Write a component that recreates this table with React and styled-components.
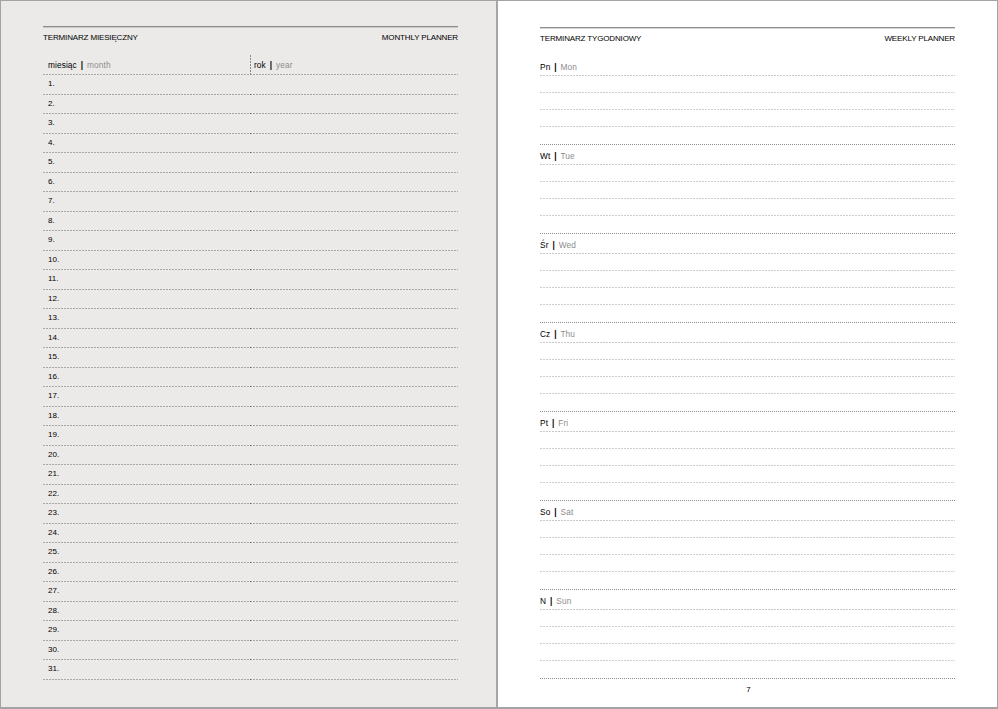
import styled, { createGlobalStyle } from 'styled-components'

const GlobalStyle = createGlobalStyle`
  html, body {
    margin: 0;
    padding: 0;
    background: #ffffff;
  }
  * {
    box-sizing: border-box;
  }
`

const dashed = (color, dash = 2, gap = 1) => `
  background-image: repeating-linear-gradient(
    to right,
    ${color} 0 ${dash}px,
    transparent ${dash}px ${dash + gap}px
  );
  background-size: 100% 1px;
  background-position: left bottom;
  background-repeat: no-repeat;
`

const days = [
  ['Pn', 'Mon'],
  ['Wt', 'Tue'],
  ['Śr', 'Wed'],
  ['Cz', 'Thu'],
  ['Pt', 'Fri'],
  ['So', 'Sat'],
  ['N', 'Sun'],
]

const App = () => {
  const numbers = Array.from({ length: 31 }, (_, i) => i + 1)

  return (
    <>
      <GlobalStyle />
      <Spread>
        <LeftPage>
          <Rule />
          <TitleRow>
            <span>TERMINARZ MIESIĘCZNY</span>
            <span>MONTHLY PLANNER</span>
          </TitleRow>
          <Table>
            <HeadRow>
              <HeadCell>
                <Label>
                  miesiąc <Bar>|</Bar> <Muted>month</Muted>
                </Label>
              </HeadCell>
              <HeadCell $divider>
                <Label>
                  rok <Bar>|</Bar> <Muted>year</Muted>
                </Label>
              </HeadCell>
            </HeadRow>
            {numbers.map((n) => (
              <MonthRow key={n}>
                <Num>{n}.</Num>
                <Tick />
              </MonthRow>
            ))}
          </Table>
        </LeftPage>

        <RightPage>
          <Rule />
          <TitleRow>
            <span>TERMINARZ TYGODNIOWY</span>
            <span>WEEKLY PLANNER</span>
          </TitleRow>
          <Week>
            {days.map(([pl, en]) => (
              <Day key={en}>
                <DayLabel>
                  <Label>
                    {pl} <Bar>|</Bar> <Muted>{en}</Muted>
                  </Label>
                </DayLabel>
                <NoteLine />
                <NoteLine />
                <NoteLine />
                <NoteLine $last />
              </Day>
            ))}
          </Week>
          <PageNumber>7</PageNumber>
        </RightPage>
      </Spread>
    </>
  )
}

const Spread = styled.div`
  display: flex;
  width: 998px;
  height: 709px;
  border: 1px solid #a3a3a3;
  border-bottom-width: 2px;
  font-family: "Liberation Sans", Arial, sans-serif;
  color: #000000;
`

const LeftPage = styled.section`
  flex: 0 0 497px;
  display: flex;
  flex-direction: column;
  padding: 25px 38px 0 42px;
  background: #ebeae8;
  border-right: 2px solid #a6a6a6;
`

const RightPage = styled.section`
  flex: 1;
  display: flex;
  flex-direction: column;
  padding: 26px 42px 0 42px;
  background: #ffffff;
`

const Rule = styled.div`
  height: 1px;
  background: #8c8c8c;
  box-shadow: 0 1px 0 rgba(140, 140, 140, 0.35);
`

const TitleRow = styled.div`
  display: flex;
  justify-content: space-between;
  padding-top: 6px;
  font-size: 8px;
  line-height: 10px;
  letter-spacing: -0.15px;
`

const Table = styled.div`
  margin-top: 12px;
  display: flex;
  flex-direction: column;
`

const HeadRow = styled.div`
  display: grid;
  grid-template-columns: 207px 1fr;
  height: 20px;
  ${dashed('#a8a8a8')}
`

const HeadCell = styled.div`
  display: flex;
  align-items: center;
  padding: 0 0 1px ${({ $divider }) => ($divider ? '4px' : '5px')};
  ${({ $divider }) =>
    $divider &&
    `
    background-image: repeating-linear-gradient(
      to bottom,
      #8a8a8a 0 2px,
      transparent 2px 3px
    );
    background-size: 1px 100%;
    background-repeat: no-repeat;
    background-position: left top;
  `}
`

const Label = styled.span`
  font-size: 8.3px;
  line-height: 10px;
  white-space: pre;
  letter-spacing: 0.1px;
`

const Bar = styled.span`
  font-weight: 700;
  padding: 0 1.5px;
`

const Muted = styled.span`
  color: #8c8c8c;
`

const MonthRow = styled.div`
  position: relative;
  display: flex;
  align-items: center;
  height: 19.5px;
  padding: 0 0 1px 5px;
  ${dashed('#a8a8a8')}
`

const Tick = styled.span`
  position: absolute;
  left: 207px;
  bottom: 0;
  width: 1px;
  height: 1px;
  background: #555555;
`

const Num = styled.span`
  font-size: 8px;
  line-height: 10px;
`

const Week = styled.div`
  margin-top: 15px;
  display: flex;
  flex-direction: column;
`

const Day = styled.div`
  display: flex;
  flex-direction: column;
  margin-bottom: 3px;
`

const DayLabel = styled.div`
  display: flex;
  align-items: center;
  height: 17px;
  padding-bottom: 1px;
  ${dashed('#c9c9c9')}
`

const NoteLine = styled.div`
  height: ${({ $last }) => ($last ? '18px' : '17px')};
  ${({ $last }) => ($last ? dashed('#8e8e8e', 1, 1) : dashed('#cdcdcd'))}
`

const PageNumber = styled.div`
  margin-top: 3px;
  text-align: center;
  font-size: 8px;
  line-height: 10px;
  padding-left: 2px;
`

export default App
